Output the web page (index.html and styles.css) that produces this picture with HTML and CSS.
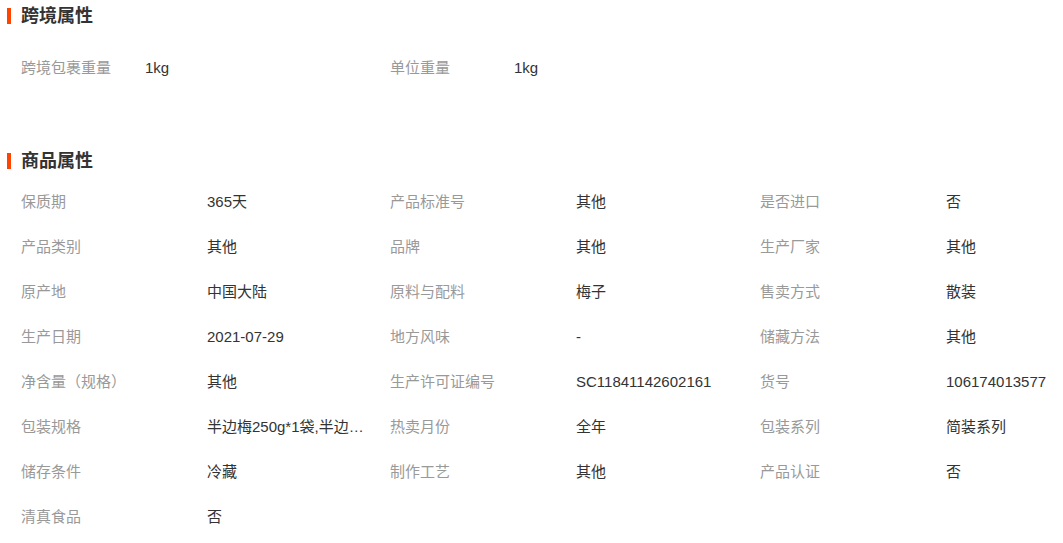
FILE: index.html
```html
<!DOCTYPE html>
<html lang="zh-CN">
<head>
  <meta charset="UTF-8">
  <title>商品属性</title>
  <link rel="stylesheet" href="styles.css">
</head>
<body>
  <div class="section section-cross">
    <h2 class="section-title">跨境属性</h2>
    <ul class="attr-list attr-list-cross">
      <li><span class="attr-name">跨境包裹重量</span><span class="attr-value">1kg</span></li>
      <li><span class="attr-name">单位重量</span><span class="attr-value">1kg</span></li>
    </ul>
  </div>

  <div class="section section-product">
    <h2 class="section-title">商品属性</h2>
    <ul class="attr-list attr-list-product">
      <li><span class="attr-name">保质期</span><span class="attr-value">365天</span></li>
      <li><span class="attr-name">产品标准号</span><span class="attr-value">其他</span></li>
      <li><span class="attr-name">是否进口</span><span class="attr-value">否</span></li>
      <li><span class="attr-name">产品类别</span><span class="attr-value">其他</span></li>
      <li><span class="attr-name">品牌</span><span class="attr-value">其他</span></li>
      <li><span class="attr-name">生产厂家</span><span class="attr-value">其他</span></li>
      <li><span class="attr-name">原产地</span><span class="attr-value">中国大陆</span></li>
      <li><span class="attr-name">原料与配料</span><span class="attr-value">梅子</span></li>
      <li><span class="attr-name">售卖方式</span><span class="attr-value">散装</span></li>
      <li><span class="attr-name">生产日期</span><span class="attr-value">2021-07-29</span></li>
      <li><span class="attr-name">地方风味</span><span class="attr-value">-</span></li>
      <li><span class="attr-name">储藏方法</span><span class="attr-value">其他</span></li>
      <li><span class="attr-name">净含量（规格）</span><span class="attr-value">其他</span></li>
      <li><span class="attr-name">生产许可证编号</span><span class="attr-value">SC11841142602161</span></li>
      <li><span class="attr-name">货号</span><span class="attr-value">106174013577</span></li>
      <li><span class="attr-name">包装规格</span><span class="attr-value" title="半边梅250g*1袋,半边梅500g*1袋">半边梅250g*1袋,半边梅500g*1袋</span></li>
      <li><span class="attr-name">热卖月份</span><span class="attr-value">全年</span></li>
      <li><span class="attr-name">包装系列</span><span class="attr-value">简装系列</span></li>
      <li><span class="attr-name">储存条件</span><span class="attr-value">冷藏</span></li>
      <li><span class="attr-name">制作工艺</span><span class="attr-value">其他</span></li>
      <li><span class="attr-name">产品认证</span><span class="attr-value">否</span></li>
      <li><span class="attr-name">清真食品</span><span class="attr-value">否</span></li>
    </ul>
  </div>
</body>
</html>
```

FILE: styles.css
```css
body {
  margin: 0;
  padding: 0;
  background: #ffffff;
  font-family: "Liberation Sans", "Noto Sans CJK SC", sans-serif;
  font-size: 15px;
  color: #333;
  width: 1063px;
  height: 543px;
  overflow: hidden;
}

.section-title {
  margin: 0 0 0 7px;
  padding-left: 14px;
  height: 32px;
  line-height: 32px;
  font-size: 18px;
  font-weight: bold;
  color: #333;
  position: relative;
}

.section-title::before {
  content: "";
  position: absolute;
  left: 0;
  top: 8px;
  width: 4px;
  height: 16px;
  background: #ff4400;
}

.attr-list {
  list-style: none;
  margin: 0;
  padding: 0 0 0 21px;
  display: grid;
  grid-template-columns: 369px 370px 300px;
}

.attr-list li {
  display: flex;
  height: 45px;
  line-height: 45px;
  white-space: nowrap;
}

.attr-list-cross {
  margin-top: 13px;
}

.attr-list-cross .attr-name {
  width: 124px;
}

.section-product {
  margin-top: 55px;
}

.attr-list-product {
  margin-top: 2px;
}

.attr-list-product .attr-name {
  width: 186px;
}

.attr-name {
  color: #999;
  flex-shrink: 0;
}

.attr-value {
  color: #333;
  max-width: 158px;
  overflow: hidden;
  text-overflow: ellipsis;
}
```
